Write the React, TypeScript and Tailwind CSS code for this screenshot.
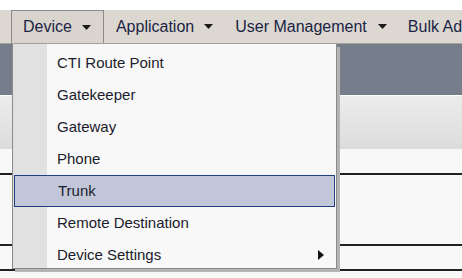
const items = [
  "CTI Route Point",
  "Gatekeeper",
  "Gateway",
  "Phone",
  "Trunk",
  "Remote Destination",
  "Device Settings",
];

function Caret() {
  return (
    <svg width="9" height="5" viewBox="0 0 9 5" className="shrink-0">
      <path d="M0 0 H9 L4.5 5 Z" fill="#1a1a1a" />
    </svg>
  );
}

export default function App() {
  return (
    <main className="relative w-[462px] h-[278px] overflow-hidden bg-white font-['Liberation_Sans',Arial,sans-serif]">
      {/* top strip */}
      <div className="h-[10px] bg-white" />

      {/* menu bar */}
      <div className="flex h-[34px] overflow-hidden whitespace-nowrap bg-[#dcd8d1] border-b border-[#a6a29a] pl-[11px] text-[16px] text-[#1b2444]">
        <div className="flex shrink-0 items-center gap-[10px] pl-[11px] pr-[12px] border border-b-0 border-[#8a8a8a] bg-[#d9d5ce]">
          <span>Device</span>
          <Caret />
        </div>
        <div className="flex shrink-0 items-center gap-[10px] pl-[12px] pr-[10px]">
          <span>Application</span>
          <Caret />
        </div>
        <div className="flex shrink-0 items-center gap-[11px] pl-[12px] pr-[21px]">
          <span>User Management</span>
          <Caret />
        </div>
        <div className="flex shrink-0 items-center">
          <span>Bulk Administration</span>
        </div>
      </div>

      {/* slate band */}
      <div className="h-[51px] bg-[#767e8c]" />

      {/* page body */}
      <div className="h-[54px] bg-gradient-to-b from-[#ececec] to-[#dcdcdc] border-t border-white" />
      <div className="bg-[#f8f8f8] h-[200px]">
        <div className="h-[24px]" />
        <div className="h-[2px] bg-[#222]" />
        <div className="h-[69px]" />
        <div className="h-[2px] bg-[#222]" />
        <div className="h-[23px]" />
        <div className="h-[2px] bg-[#222]" />
      </div>

      {/* dropdown menu */}
      <div className="absolute left-[12px] top-[44px] w-[325px] h-[225px] overflow-hidden bg-[#f8f8f8] border border-t-0 border-[#8a8a8a] shadow-[3px_3px_0_#b4b4b4]">
        <div className="absolute left-0 top-0 bottom-0 w-[34px] bg-[#e1e1e1]" />
        <div className="relative pt-[3px] text-[15px] text-[#1c1c2c]">
          {items.map((label) =>
            label === "Trunk" ? (
              <div
                key={label}
                className="flex items-center h-[32px] mx-[1px] pl-[43px] bg-[#c1c7d9] border border-[#1f3f80]"
              >
                {label}
              </div>
            ) : (
              <div key={label} className="flex items-center justify-between h-[32px] pl-[44px] pr-[12px]">
                <span>{label}</span>
                {label === "Device Settings" && (
                  <svg width="6" height="10" viewBox="0 0 6 10">
                    <path d="M0 0 L6 5 L0 10 Z" fill="#111" />
                  </svg>
                )}
              </div>
            )
          )}
        </div>
      </div>
    </main>
  );
}
